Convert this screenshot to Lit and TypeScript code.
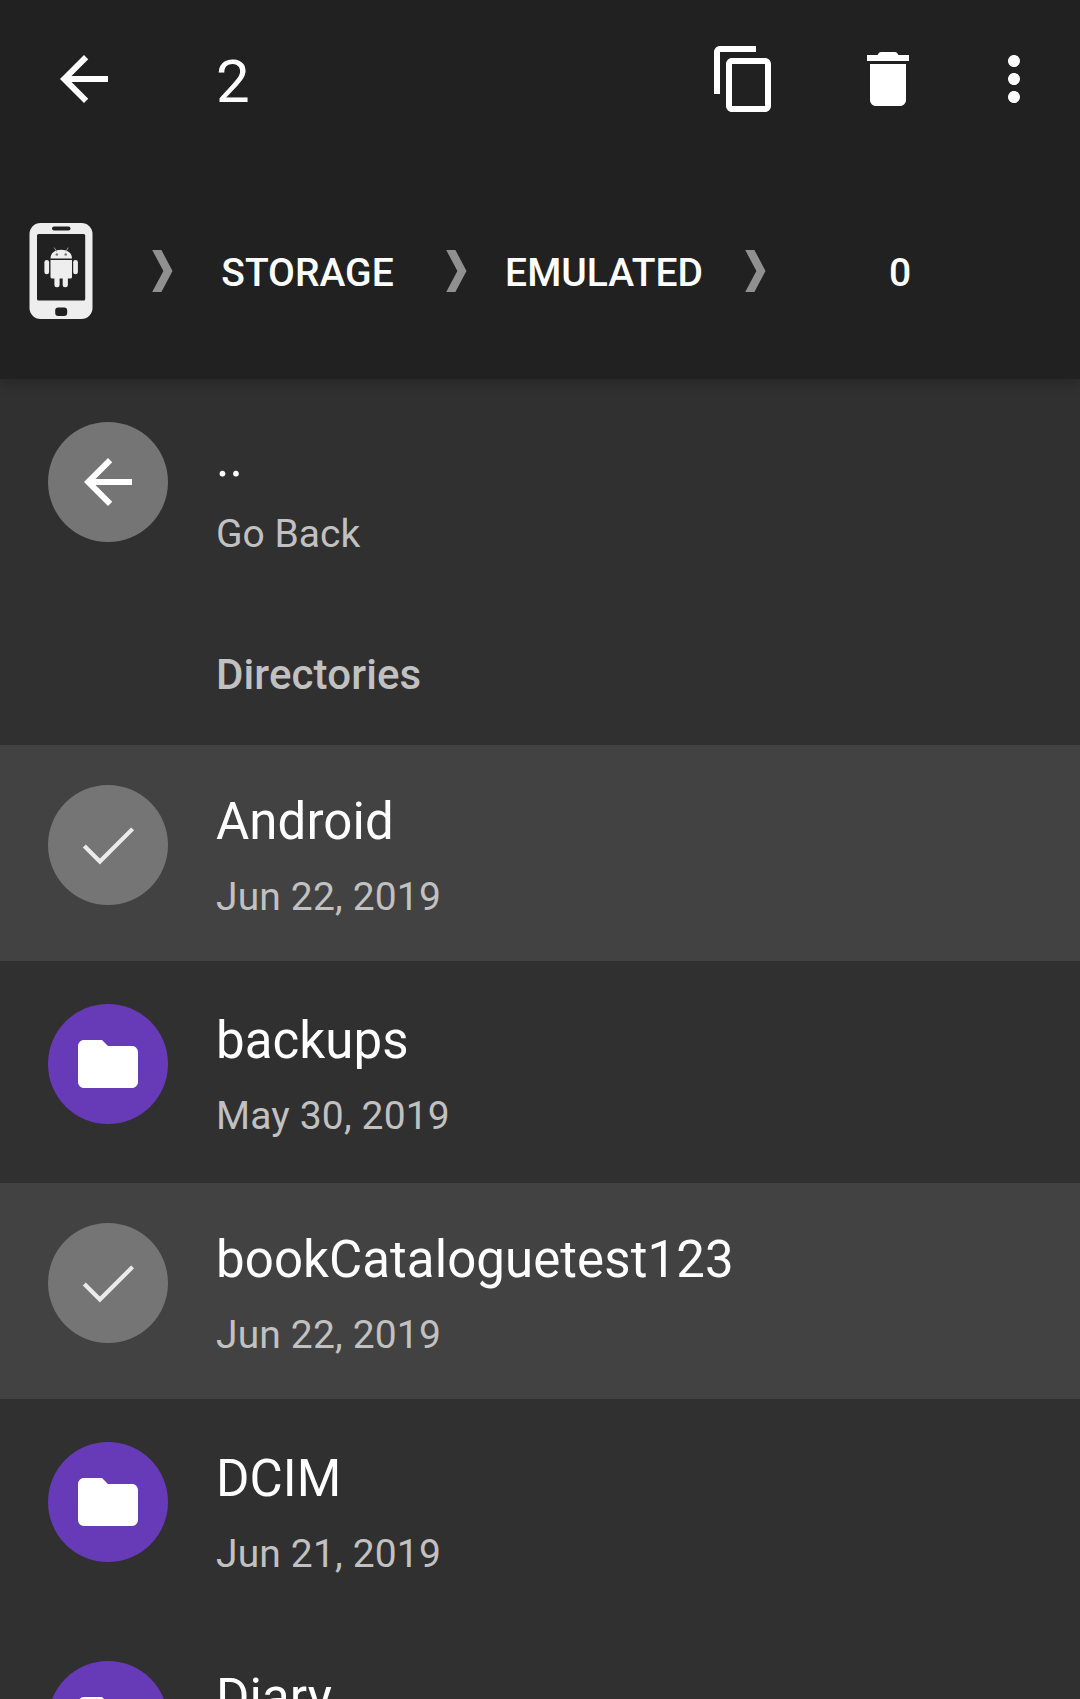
import { LitElement, html, css, svg } from "lit";
import { customElement, property } from "lit/decorators.js";

type Kind = "back" | "check" | "folder";

interface Entry {
  kind: Kind;
  name: string;
  detail: string;
}

const glyphs = {
  arrow: svg`<path d="M20 11H7.83l5.59-5.59L12 4l-8 8 8 8 1.41-1.41L7.83 13H20v-2z"/>`,
  copy: svg`<path d="M16 1H4c-1.1 0-2 .9-2 2v14h2V3h12V1zm3 4H8c-1.1 0-2 .9-2 2v14c0 1.1.9 2 2 2h11c1.1 0 2-.9 2-2V7c0-1.1-.9-2-2-2zm0 16H8V7h11v14z"/>`,
  trash: svg`<path d="M6 19c0 1.100.9 2 2 2h8c1.100 0 2-.9 2-2V7H6v12zM19 4h-3.500C15.100 3.300 14.900 3 14.300 3H9.700C9.100 3 8.900 3.300 8.500 4H5v2h14V4z"/>`,
  more: svg`<path d="M12 8c1.1 0 2-.9 2-2s-.9-2-2-2-2 .9-2 2 .9 2 2 2zm0 2c-1.1 0-2 .9-2 2s.9 2 2 2 2-.9 2-2-.9-2-2-2zm0 6c-1.1 0-2 .9-2 2s.9 2 2 2 2-.9 2-2-.9-2-2-2z"/>`,
  folder: svg`<path d="M10 4H4c-1.1 0-1.99.9-1.99 2L2 18c0 1.1.9 2 2 2h16c1.1 0 2-.9 2-2V8c0-1.1-.9-2-2-2h-8l-2-2z"/>`,
  check: svg`<path d="M4.100 12.330 9.300 17.530 20.200 6.630" fill="none" stroke="#ebebeb" stroke-width="1.400"/>`,
};

@customElement("file-row")
export class FileRow extends LitElement {
  @property() kind: Kind = "folder";
  @property() name = "";
  @property() detail = "";

  static styles = css`
    :host { display: block; height: 219px; }
    .row { display: flex; height: 216px; box-sizing: border-box; padding: 40px 48px 0; gap: 48px; }
    .selected { background: #424242; }
    .disc {
      display: flex; align-items: center; justify-content: center; flex: none;
      width: 120px; height: 120px; border-radius: 50%; background: #757575;
    }
    .folder { background: #673ab7; }
    .icon { display: block; width: 72px; height: 72px; fill: #fff; }
    .name { color: #fff; font-size: 51px; line-height: 60px; padding-top: 7px; letter-spacing: 0.08px; white-space: nowrap; }
    .detail { color: #c1c1c1; font-size: 39px; line-height: 46px; padding-top: 22px; white-space: nowrap; }
    .date { letter-spacing: 0.16px; }
  `;

  render() {
    const glyph = this.kind === "back" ? glyphs.arrow : glyphs[this.kind];
    return html`
      <div class="row ${this.kind === "check" ? "selected" : ""}">
        <div class="disc ${this.kind}"><svg class="icon" viewBox="0 0 24 24">${glyph}</svg></div>
        <div class="text">
          <div class="name">${this.name}</div>
          <div class="detail ${this.kind === "back" ? "" : "date"}">${this.detail}</div>
        </div>
      </div>`;
  }
}

@customElement("app-root")
export class AppRoot extends LitElement {
  private entries: Entry[] = [
    { kind: "check", name: "Android", detail: "Jun 22, 2019" },
    { kind: "folder", name: "backups", detail: "May 30, 2019" },
    { kind: "check", name: "bookCataloguetest123", detail: "Jun 22, 2019" },
    { kind: "folder", name: "DCIM", detail: "Jun 21, 2019" },
    { kind: "folder", name: "Diary", detail: "Jun 22, 2019" },
  ];

  static styles = css`
    :host {
      display: block; width: 1080px; height: 1699px; overflow: hidden;
      background: #303030; font-family: Roboto, "Liberation Sans", sans-serif;
    }
    .header { position: relative; height: 379px; background: #212121; box-shadow: 0 4px 12px rgba(0, 0, 0, 0.22); }
    .bar { display: flex; align-items: center; height: 158px; padding: 0 30px 0 48px; }
    .icon { display: block; width: 72px; height: 72px; fill: #fff; }
    .count { flex: 1; color: #fff; font-size: 60px; line-height: 70px; padding: 5px 0 0 96px; }
    .actions { display: flex; }
    .action { padding-left: 72px; }
    .action.last { padding-left: 54px; }
    .crumbs { display: flex; align-items: center; height: 226px; }
    .phone { display: block; flex: none; width: 64px; height: 96px; margin: 0 59px 0 29px; filter: blur(0.4px); }
    .chevron { display: block; flex: none; width: 21px; height: 42px; fill: #909090; filter: blur(0.3px); }
    .crumb { box-sizing: border-box; color: #fff; font-size: 39px; font-weight: 500; line-height: 46px; text-align: center; padding-top: 3px; }
    .storage { width: 273px; padding-right: 4px; }
    .emulated { width: 278px; padding-right: 4px; }
    .zero { width: 268px; }
    .list { padding-top: 3px; }
    .section { height: 144px; line-height: 148px; padding-left: 216px; color: #c1c1c1; font-size: 42px; font-weight: 500; letter-spacing: 0.12px; }
  `;

  private icon(g: unknown) {
    return html`<svg class="icon" viewBox="0 0 24 24">${g}</svg>`;
  }

  private chevron() {
    return html`<svg class="chevron" viewBox="0 0 21 42"><path d="M0.2 0H9.400L20.500 21 9.400 42H0.200L11.400 21z"/></svg>`;
  }

  private phone() {
    return html`<svg class="phone" viewBox="0 0 64 96">
      <rect x="0.5" y="0" width="63" height="96" rx="11" fill="#eee"/>
      <rect x="23" y="3.5" width="18.5" height="4" rx="2" fill="#212121"/>
      <rect x="8" y="11" width="48.2" height="66.5" rx="1.5" fill="#212121"/>
      <rect x="26.200" y="84.5" width="12" height="8.5" rx="3" fill="#212121"/>
      <g fill="#eee">
        <path d="M21.500 35.400C21.500 30 26 26.800 32.200 26.800S43 30 43 35.400z"/>
        <path d="M25.300 24.600 27.500 28.500M39.200 24.600 37 28.500" stroke="#999" stroke-width="1" fill="none"/>
        <path d="M21.500 36.900H43V54Q43 55.500 41.500 55.500H23Q21.500 55.500 21.500 54z"/>
        <rect x="15.400" y="37" width="4.700" height="14.300" rx="2.300"/>
        <rect x="44.200" y="37" width="4.700" height="14.300" rx="2.300"/>
        <rect x="25.400" y="50" width="5.200" height="14.200" rx="2.300"/>
        <rect x="33.700" y="50" width="5.200" height="14.200" rx="2.300"/>
      </g>
      <circle cx="27.800" cy="31.500" r="1.300" fill="#777"/>
      <circle cx="36.700" cy="31.500" r="1.300" fill="#777"/>
    </svg>`;
  }

  render() {
    return html`
      <div class="header">
        <div class="bar">
          ${this.icon(glyphs.arrow)}
          <div class="count">2</div>
          <div class="actions">
            <div class="action">${this.icon(glyphs.copy)}</div>
            <div class="action">${this.icon(glyphs.trash)}</div>
            <div class="action last">${this.icon(glyphs.more)}</div>
          </div>
        </div>
        <div class="crumbs">
          ${this.phone()}
          ${this.chevron()}
          <div class="crumb storage">STORAGE</div>
          ${this.chevron()}
          <div class="crumb emulated">EMULATED</div>
          ${this.chevron()}
          <div class="crumb zero">0</div>
        </div>
      </div>
      <div class="list">
        <file-row kind="back" name=".." detail="Go Back"></file-row>
        <div class="section">Directories</div>
        ${this.entries.map((e) => html`<file-row .kind=${e.kind} .name=${e.name} .detail=${e.detail}></file-row>`)}
      </div>`;
  }
}
